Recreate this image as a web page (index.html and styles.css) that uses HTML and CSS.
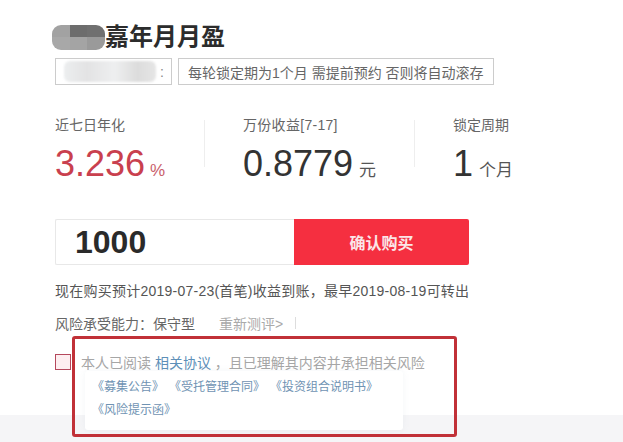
FILE: index.html
```html
<!DOCTYPE html>
<html lang="zh">
<head>
<meta charset="utf-8">
<title>嘉年月月盈</title>
<link rel="stylesheet" href="styles.css">
</head>
<body>
<div class="page">
  <main class="content">
    <h1 class="title"><span class="redact-dark"><i></i><i></i><i></i><i></i><i></i><i></i></span>嘉年月月盈</h1>
    <div class="tags">
      <div class="tag tag-blur"><span class="redact-light"></span><span class="colon">:</span></div>
      <div class="tag">每轮锁定期为1个月 需提前预约 否则将自动滚存</div>
    </div>
    <div class="stats">
      <div class="stat stat-a">
        <div class="label">近七日年化</div>
        <div class="value red">3.236<span class="unit">%</span></div>
      </div>
      <span class="divider"></span>
      <div class="stat stat-b">
        <div class="label">万份收益[7-17]</div>
        <div class="value">0.8779<span class="unit">元</span></div>
      </div>
      <span class="divider"></span>
      <div class="stat stat-c">
        <div class="label">锁定周期</div>
        <div class="value">1<span class="unit">个月</span></div>
      </div>
    </div>
    <div class="buy">
      <div class="amount">1000</div>
      <button class="confirm" type="button">确认购买</button>
    </div>
    <p class="note">现在购买预计2019-07-23(首笔)收益到账，最早2019-08-19可转出</p>
    <div class="risk">
      <span>风险承受能力：保守型</span>
      <a class="retest">重新测评&gt;</a>
      <span class="risk-bar"></span>
    </div>
    <div class="agree">
      <span class="checkbox"></span>
      <span class="agree-text">本人已阅读 <a class="link">相关协议</a> ，且已理解其内容并承担相关风险</span>
    </div>
    <div class="popup">
      <a>《募集公告》</a><a>《受托管理合同》</a><a>《投资组合说明书》</a><a>《风险提示函》</a>
    </div>
  </main>
  <div class="band"></div>
  <div class="frame"></div>
</div>
</body>
</html>
```

FILE: styles.css
```css
* { box-sizing: border-box; }
html, body { margin: 0; padding: 0; }
body { background: #fff; font-family: "Liberation Sans", "Noto Sans CJK SC", sans-serif; color: #555; }
.page { position: relative; width: 623px; height: 442px; overflow: hidden; background: #fff; }
.content { position: relative; z-index: 1; padding: 24px 0 0 55px; }

.title { margin: 0 0 0 -3px; height: 26px; display: flex; align-items: center; font-size: 24px; line-height: 26px; font-weight: 700; color: #2c2c2c; }
.redact-dark { display: grid; grid-template-columns: repeat(3, 1fr); width: 53px; height: 25px; border-radius: 9px; overflow: hidden; filter: blur(.6px); }
.redact-dark i:nth-child(1) { background: #a2a2a2; }
.redact-dark i:nth-child(2) { background: #6d6d6d; }
.redact-dark i:nth-child(3) { background: #707070; }
.redact-dark i:nth-child(4) { background: #a8a8a8; }
.redact-dark i:nth-child(5) { background: #a4a4a4; }
.redact-dark i:nth-child(6) { background: #9a9a9a; }

.tags { display: flex; gap: 6px; margin-top: 8px; }
.tag { height: 27px; padding: 0 9px; border: 1px solid #ccc; display: flex; align-items: center; font-size: 14px; color: #666; white-space: nowrap; }
.tag-blur { width: 117px; padding: 0 7px 0 8px; justify-content: space-between; }
.redact-light { width: 92px; height: 21px; border-radius: 6px; background: linear-gradient(90deg, #eceeef, #e3e3e4 25%, #eeeff0 55%, #dcdcdc 80%, #e6e6e6); filter: blur(1px); }
.colon { color: #888; }

.stats { display: flex; margin-top: 32px; height: 68px; }
.stat-a { width: 149px; }
.stat-b { width: 209px; padding-left: 38px; }
.stat-c { padding-left: 38px; }
.divider { width: 1px; height: 47px; margin-top: 3px; background: #eee; }
.label { font-size: 14px; line-height: 16px; color: #666; white-space: nowrap; }
.stat-b .label { letter-spacing: .3px; }
.value { margin-top: 10px; font-size: 36px; line-height: 42px; color: #333; white-space: nowrap; }
.value.red { color: #c9404e; }
.unit { margin-left: 6px; font-size: 17px; color: #555; }
.value.red .unit { color: #c9606c; margin-left: 5px; }

.buy { display: flex; width: 414px; height: 46px; margin-top: 34px; }
.amount { width: 239px; padding-left: 19px; border: 1px solid #e8e8e8; border-right: 0; border-radius: 2px 0 0 2px; font-size: 32px; line-height: 44px; font-weight: 700; color: #2a2a2a; }
.confirm { flex: 1; border: 0; border-radius: 0 2px 2px 0; background: #f52f40; color: #fbe6e8; font: 700 16px "Liberation Sans", "Noto Sans CJK SC", sans-serif; }

.note { margin: 17px 0 0; font-size: 14px; line-height: 18px; letter-spacing: .24px; color: #555; white-space: nowrap; }
.risk { display: flex; align-items: center; margin-top: 14px; height: 18px; font-size: 14px; color: #666; white-space: nowrap; }
.retest { margin-left: 24px; color: #aaa; }
.risk-bar { width: 1px; height: 12px; margin-left: 12px; background: #ddd; }

.agree { display: flex; align-items: center; height: 16px; margin-top: 22px; }
.checkbox { width: 16px; height: 16px; border: 1px solid #b5485c; background: #fdeef0; }
.agree-text { margin-left: 10px; font-size: 14px; color: #a6a6a6; white-space: nowrap; }
.link { color: #5d8fb8; }

.popup { position: relative; z-index: 2; display: flex; flex-wrap: wrap; align-content: flex-start; column-gap: 5px; width: 318px; height: 59px; margin: 1px 0 0 30px; padding: 5px 0 0 7px; background: #fff; border-radius: 3px; font-size: 12px; line-height: 23px; color: #6f93b3; box-shadow: 0 0 6px rgba(160, 180, 200, .12); }
.popup a { white-space: nowrap; }
.popup a:nth-child(4) { margin-right: 100px; }

.band { position: absolute; left: 0; right: 0; bottom: 0; height: 27px; background: #f5f5f7; }
.frame { position: absolute; z-index: 3; left: 72px; top: 336px; width: 385px; height: 101px; border: 3px solid #c13138; border-radius: 3px; }
```
